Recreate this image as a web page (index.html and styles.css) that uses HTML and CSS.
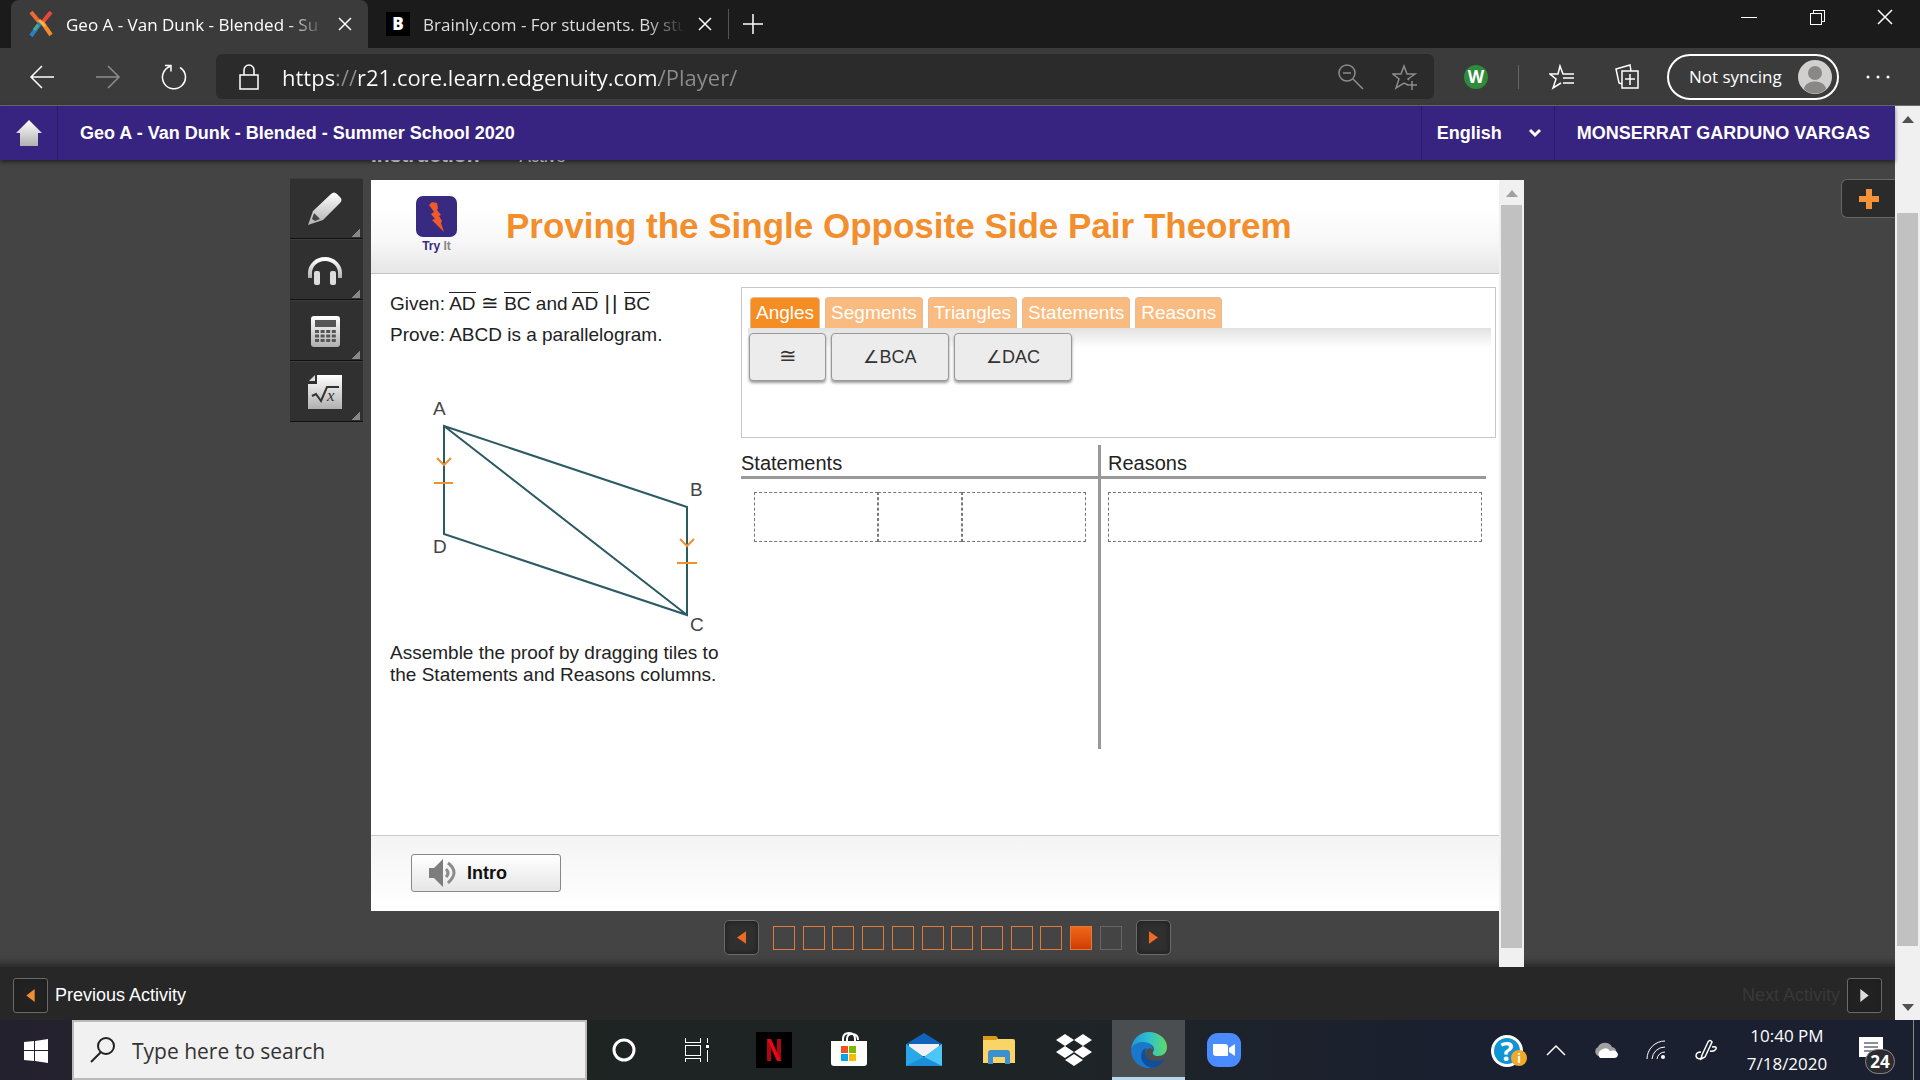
FILE: index.html
```html
<!DOCTYPE html>
<html lang="en">
  <head>
    <meta charset="UTF-8" />
    <meta name="viewport" content="width=device-width, initial-scale=1.0" />
    <title>Geo A - Van Dunk - Blended - Summer School 2020</title>
    <link rel="stylesheet" href="styles.css">
  </head>
  <body>
    <!-- browser tabs -->
    <div class="tabstrip">
      <div class="browser-tab active">
        <svg width="24" height="26" viewBox="0 0 24 26">
          <path d="M2 1l9 11" stroke="#ee6a35" stroke-width="4"/>
          <path d="M22 1l-9 11" stroke="#e8483c" stroke-width="4"/>
          <path d="M13 11l9 13" stroke="#f08a2c" stroke-width="4"/>
          <path d="M12 11L2 25" stroke="#2f7fc0" stroke-width="4"/>
          <path d="M10 9l6 6" stroke="#f5b63c" stroke-width="3"/>
          <path d="M9 14l-4 5" stroke="#3fae8a" stroke-width="3"/>
        </svg>
        <span class="tab-title">Geo A - Van Dunk - Blended - Su</span>
        <button class="icon-btn" aria-label="Close tab">
          <svg width="14" height="14" viewBox="0 0 14 14" class="line"><path d="M1 1l12 12M13 1L1 13"/></svg>
        </button>
      </div>
      <div class="browser-tab">
        <span class="brainly">B</span>
        <span class="tab-title">Brainly.com - For students. By stu</span>
        <button class="icon-btn" aria-label="Close tab">
          <svg width="14" height="14" viewBox="0 0 14 14" class="line"><path d="M1 1l12 12M13 1L1 13"/></svg>
        </button>
      </div>
      <button class="icon-btn new-tab" aria-label="New tab">
        <svg width="20" height="20" viewBox="0 0 20 20" class="line"><path d="M10 0v20M0 10h20"/></svg>
      </button>
      <div class="window-btns">
        <button class="icon-btn" aria-label="Minimize">
          <svg width="16" height="16" viewBox="0 0 16 16" class="line crisp thin"><path d="M0 8h16"/></svg>
        </button>
        <button class="icon-btn" aria-label="Restore">
          <svg width="16" height="16" viewBox="0 0 16 16" class="line crisp thin"><path d="M1 4h11v11H1zM4 4V1h11v11h-3"/></svg>
        </button>
        <button class="icon-btn" aria-label="Close">
          <svg width="16" height="16" viewBox="0 0 16 16" class="line"><path d="M1 1l14 14M15 1L1 15"/></svg>
        </button>
      </div>
    </div>

    <!-- address bar -->
    <div class="toolbar">
      <div class="nav-btns">
        <button class="icon-btn" aria-label="Back">
          <svg width="26" height="24" viewBox="0 0 26 24" class="line"><path d="M25 12H2M13 1L2 12l11 11"/></svg>
        </button>
        <button class="icon-btn dim" aria-label="Forward">
          <svg width="26" height="24" viewBox="0 0 26 24" class="line"><path d="M1 12h23M13 1l11 11-11 11"/></svg>
        </button>
        <button class="icon-btn" aria-label="Refresh">
          <svg width="26" height="26" viewBox="0 0 26 26" class="line"><path d="M19 3.500A11.500 11.500 0 1 1 9 2.500M4 1.500h6v6"/></svg>
        </button>
      </div>
      <div class="address">
        <svg width="20" height="26" viewBox="0 0 20 26" class="line"><path d="M1 11h18v14H1zM5 11V6a5 5 0 0 1 10 0v5"/></svg>
        <input class="url" type="text" aria-label="Address" value="https://r21.core.learn.edgenuity.com/Player/">
        <button class="icon-btn dim" aria-label="Zoom">
          <svg width="26" height="26" viewBox="0 0 26 26" class="line"><circle cx="9" cy="9" r="8"/><path d="M15 15l10 10M5 9h8"/></svg>
        </button>
        <button class="icon-btn dim" aria-label="Add to favorites">
          <svg width="26" height="26" viewBox="0 0 26 26" class="line"><path d="M17 16l-1-1 7-5h-8L12 2 9 10H1l6 5-3 9 8-5 4 2M20 17v9M15 21h10"/></svg>
        </button>
      </div>
      <div class="toolbar-right">
        <span class="w-badge">W</span>
        <span class="divider"></span>
        <button class="icon-btn" aria-label="Favorites">
          <svg width="26" height="26" viewBox="0 0 26 26" class="line"><path d="M25 10H14L11 2 9 10H1l6 5-3 9 8-5M14 14h11M14 19h11"/></svg>
        </button>
        <button class="icon-btn" aria-label="Collections">
          <svg width="26" height="26" viewBox="0 0 26 26" class="line"><path d="M8 7h16v17H8zM16 10v11M11 15h10M8 20l-3-1L2 5l14-4 1 6"/></svg>
        </button>
        <button class="profile">
          Not syncing
          <svg width="34" height="34" viewBox="0 0 34 34"><circle cx="17" cy="17" r="17" fill="#d2d0ce"/><circle cx="17" cy="13" r="7" fill="#8a8886"/><path d="M6 29c1-10 21-10 22 0-6 6-16 6-22 0z" fill="#8a8886"/></svg>
        </button>
        <button class="icon-btn" aria-label="More">
          <svg width="24" height="4" viewBox="0 0 24 4" fill="#fff"><circle cx="2" cy="2" r="1.500"/><circle cx="12" cy="2" r="1.500"/><circle cx="22" cy="2" r="1.500"/></svg>
        </button>
      </div>
    </div>

    <div class="page">
      <div class="player">
        <header class="course-bar">
          <a class="home" href="#" aria-label="Home">
            <svg width="26" height="26" viewBox="0 0 26 26">
              <defs><linearGradient id="silver" x1="0" y1="0" x2="0" y2="1"><stop offset="0" stop-color="#fff"/><stop offset="1" stop-color="#b0b0b0"/></linearGradient></defs>
              <path d="M13 0l13 13h-4v13H4V13H0z" fill="url(#silver)"/>
            </svg>
          </a>
          <div class="course-name">Geo A - Van Dunk - Blended - Summer School 2020</div>
          <div class="language">
            <select aria-label="Language"><option>English</option></select>
            <svg width="14" height="10" viewBox="0 0 14 10"><path d="M2 2l5 5 5-5" fill="none" stroke="#fff" stroke-width="3"/></svg>
          </div>
          <div class="student">MONSERRAT GARDUNO VARGAS</div>
        </header>

        <main class="stage">
          <div class="tools">
            <button aria-label="Highlighter">
              <svg width="36" height="36" viewBox="0 0 36 36"><path d="M1 34l5-14L24 3q3-3 6 0l3 3q3 3 0 6L16 29z" fill="url(#silver)"/><path d="M5 28l2-6 6 6-5 2z" fill="#444"/></svg>
            </button>
            <button aria-label="Read aloud">
              <svg width="36" height="36" viewBox="0 0 36 36"><path d="M3 26v-5a15 14 0 0 1 30 0v5" fill="none" stroke="url(#silver)" stroke-width="4"/><rect x="7" y="19" width="6" height="14" rx="2" fill="#ddd"/><rect x="23" y="19" width="6" height="14" rx="2" fill="#ddd"/></svg>
            </button>
            <button aria-label="Calculator">
              <svg width="36" height="36" viewBox="0 0 36 36"><rect x="4" y="3" width="29" height="31" rx="3" fill="url(#silver)"/><path d="M8 7h21v7H8z" fill="#555"/><path d="M8 18.500h21M8 23h21M8 27.500h21" stroke="#555" stroke-width="3" stroke-dasharray="4 1.600"/></svg>
            </button>
            <button aria-label="Formulas">
              <svg width="36" height="36" viewBox="0 0 36 36"><path d="M10 1h25v34H1V10h9z" fill="url(#silver)"/><path d="M2 7l6-6v6z" fill="#ddd"/><path d="M5 22l4-2 5 7 6-14h12" fill="none" stroke="#333" stroke-width="2"/><text x="20" y="27" class="formula">x</text></svg>
            </button>
          </div>

          <div class="lesson">
            <div class="crumbs"><span class="crumb-main">Instruction</span><span>Active</span></div>
            <div class="frame">
              <div class="frame-main">
                <article class="slide">
                  <div class="slide-head">
                    <div class="try-it">
                      <svg width="41" height="41" viewBox="0 0 41 41"><rect width="41" height="41" rx="7" fill="#372a80"/><path d="M13 9l3-3 5 1 1 5-1 2 4 5-2 1 3 5-1 2 3 9-9-9-3-3 3-1-4-5 3-2z" fill="#f0592a"/></svg>
                      <span>Try <b>It</b></span>
                    </div>
                    <h1>Proving the Single Opposite Side Pair Theorem</h1>
                  </div>

                  <div class="slide-body">
                    <section class="problem">
                      <p class="given">Given: <span class="seg">AD</span> <span class="cong">≅</span> <span class="seg">BC</span> and <span class="seg">AD</span> <span class="bar">|</span><span class="bar">|</span> <span class="seg">BC</span></p>
                      <p class="given">Prove: ABCD is a parallelogram.</p>
                      <svg class="figure" width="340" height="292" viewBox="0 0 340 292">
                        <g fill="none" stroke="#2b5a63" stroke-width="2">
                          <path d="M54 76L297 157V265L54 184zL297 265"/>
                        </g>
                        <g fill="none" stroke="#f0902e" stroke-width="2">
                          <path d="M47 108l7 7 7-7M44 133h19"/>
                          <path d="M290 189l7 7 7-7M287 213h20"/>
                        </g>
                        <text x="43" y="65">A</text>
                        <text x="300" y="146">B</text>
                        <text x="300" y="281">C</text>
                        <text x="43" y="203">D</text>
                      </svg>
                      <p class="directions">Assemble the proof by dragging tiles to the Statements and Reasons columns.</p>
                    </section>

                    <section class="proof">
                      <div class="bank">
                        <div class="bank-tabs">
                          <button class="active">Angles</button>
                          <button>Segments</button>
                          <button>Triangles</button>
                          <button>Statements</button>
                          <button>Reasons</button>
                        </div>
                        <div class="tiles">
                          <button class="tile small"><span class="cong">≅</span></button>
                          <button class="tile">∠BCA</button>
                          <button class="tile">∠DAC</button>
                        </div>
                      </div>
                      <table class="proof-table">
                        <thead>
                          <tr><th>Statements</th><th>Reasons</th></tr>
                        </thead>
                        <tbody>
                          <tr>
                            <td><div class="slots"><span></span><span class="narrow"></span><span></span></div></td>
                            <td><div class="slots"><span></span></div></td>
                          </tr>
                        </tbody>
                      </table>
                    </section>
                  </div>

                  <div class="slide-foot">
                    <button class="intro">
                      <svg width="28" height="28" viewBox="0 0 28 28"><path d="M0 9h5l9-9v28l-9-9H0z" fill="#7d7d7d"/><path d="M17 10q4 4 0 8M19 4q12 9 0 20" fill="none" stroke="#8b8b8b" stroke-width="3"/></svg>
                      Intro
                    </button>
                  </div>
                </article>

                <nav class="pager">
                  <button class="arrow" aria-label="Previous"><svg width="9" height="13" viewBox="0 0 10 14"><path d="M10 0v14L0 7z" fill="#ef6a22"/></svg></button>
                  <div class="steps">
                    <a href="#"></a><a href="#"></a><a href="#"></a><a href="#"></a><a href="#"></a><a href="#"></a>
                    <a href="#"></a><a href="#"></a><a href="#"></a><a href="#"></a><a href="#" class="current"></a><a href="#" class="locked"></a>
                  </div>
                  <button class="arrow" aria-label="Next"><svg width="9" height="13" viewBox="0 0 10 14"><path d="M0 0v14l10-7z" fill="#ef6a22"/></svg></button>
                </nav>
              </div>
              <div class="scroll inner">
                <svg width="12" height="7" viewBox="0 0 12 7"><path d="M0 7l6-7 6 7z" fill="#a0a0a0"/></svg>
                <div class="thumb"></div>
              </div>
            </div>
          </div>

          <button class="expand" aria-label="Open panel">
            <svg width="20" height="20" viewBox="0 0 20 20"><path d="M10 0v20M0 10h20" stroke="#f5923a" stroke-width="6"/></svg>
          </button>
        </main>

        <footer class="activity-bar">
          <div class="activity">
            <button class="arrow" aria-label="Previous activity"><svg width="9" height="13" viewBox="0 0 9 14"><path d="M9 0v14L0 7z" fill="#f08c32"/></svg></button>
            <span>Previous Activity</span>
          </div>
          <div class="activity disabled">
            <span>Next Activity</span>
            <button class="arrow" aria-label="Next activity"><svg width="9" height="13" viewBox="0 0 9 14"><path d="M0 0v14l9-7z" fill="#ddd"/></svg></button>
          </div>
        </footer>
      </div>

      <div class="scroll outer">
        <svg width="12" height="7" viewBox="0 0 12 7"><path d="M0 7l6-7 6 7z" fill="#505050"/></svg>
        <div class="thumb"></div>
        <svg width="12" height="7" viewBox="0 0 12 7"><path d="M0 0l6 7 6-7z" fill="#505050"/></svg>
      </div>
    </div>

    <!-- windows taskbar -->
    <div class="taskbar">
      <button class="start" aria-label="Start">
        <svg width="24" height="24" viewBox="0 0 24 24" fill="#fff"><path d="M0 3l10-1v9H0zM11 2l13-2v11H11zM0 12h10v10L0 21zM11 12h13v12l-13-2z"/></svg>
      </button>
      <label class="search">
        <svg width="26" height="26" viewBox="0 0 26 26" fill="none" stroke="#222" stroke-width="2"><circle cx="16" cy="9" r="8"/><path d="M11 15L1 25"/></svg>
        <input type="text" placeholder="Type here to search">
      </label>
      <div class="apps">
        <button aria-label="Cortana">
          <svg width="26" height="26" viewBox="0 0 26 26"><circle cx="13" cy="13" r="10" fill="none" stroke="#fff" stroke-width="3"/></svg>
        </button>
        <button aria-label="Task view">
          <svg width="30" height="24" viewBox="0 0 30 24" class="line crisp thin"><path d="M1 0v4h15V0M1 7h15v10H1zM1 24v-4h15v4M23 0v5M23 12v12"/><path d="M22 7h3v3h-3z" fill="#fff" stroke="none"/></svg>
        </button>
        <button aria-label="Netflix">
          <svg width="36" height="36" viewBox="0 0 36 36"><path d="M0 0h36v36H0z" fill="#000"/><path d="M11 7h4v22h-4zM21 7h4v22h-4z" fill="#b1060f"/><path d="M11 7h4l10 22h-4z" fill="#e50914"/></svg>
        </button>
        <button aria-label="Microsoft Store">
          <svg width="36" height="36" viewBox="0 0 36 36"><path d="M12 10V7q0-6 6-6t6 6v3M16 10V7q0-5 5-5 6 0 6 6" fill="none" stroke="#fff" stroke-width="2"/><path d="M0 9h36v22q0 3-3 3H3q-3 0-3-3z" fill="#fff"/><path d="M10 14h7v7h-7z" fill="#f25022"/><path d="M18 14h7v7h-7z" fill="#7fba00"/><path d="M10 22h7v7h-7z" fill="#00a4ef"/><path d="M18 22h7v7h-7z" fill="#ffb900"/></svg>
        </button>
        <button aria-label="Mail">
          <svg width="36" height="36" viewBox="0 0 36 36"><path d="M0 12L18 1l18 11v12H0z" fill="#0f63b8"/><path d="M3 12h30v12H3z" fill="#f2f2f2"/><path d="M0 12l18 13 18-13v22H0z" fill="#2aa7e8"/><path d="M36 12v22L18 25z" fill="#4cc6f5"/><path d="M0 34l18-9 18 9z" fill="#1c8fd9"/></svg>
        </button>
        <button aria-label="File Explorer">
          <svg width="34" height="30" viewBox="0 0 34 30"><path d="M1 3q0-2 2-2h10l3 3h15q2 0 2 2v22H1z" fill="#f9d467"/><path d="M1 1h13l2 2-2 2H1z" fill="#d99a1b"/><path d="M6 29V18q0-3 3-3h16q3 0 3 3v11h-5v-7H11v7z" fill="#3c8fd0"/></svg>
        </button>
        <button aria-label="Dropbox">
          <svg width="36" height="32" viewBox="0 0 36 32" fill="#fff"><path d="M9 0l9 6-9 6-9-6zM27 0l9 6-9 6-9-6zM9 12l9 6-9 6-9-6zM27 12l9 6-9 6-9-6zM18 20l9 6-9 6-9-6z"/></svg>
        </button>
        <button class="running" aria-label="Microsoft Edge">
          <svg width="36" height="36" viewBox="0 0 36 36">
            <defs><linearGradient id="wave"><stop offset="0" stop-color="#2196d8"/><stop offset=".5" stop-color="#2fc1cf"/><stop offset="1" stop-color="#5fdc62"/></linearGradient></defs>
            <path d="M0 17C1 7 9 0 18 0c10 0 18 7 18 15 0 6-4 9-9 9-4 0-6-2-5-4 3-4-1-9-8-9C7 11 2 13 0 17z" fill="url(#wave)"/>
            <path d="M0 18c1-5 6-8 12-8 5 0 10 3 10 8-3-4-8-1-8 4 0 7 5 13 11 13-3 1-5 1-7 1C8 36 0 28 0 18z" fill="#1a78cc"/>
            <path d="M13 17c-5 5-4 16 8 19 6-1 10-4 13-9-9 5-20 1-20-6 0-2 1-4 2-5z" fill="#114f9c"/>
          </svg>
        </button>
        <button aria-label="Zoom">
          <svg width="34" height="34" viewBox="0 0 34 34"><rect width="34" height="34" rx="11" fill="#4a8cff"/><path d="M6 11h12q3 0 3 3v9H9q-3 0-3-3zM22 15l6-4v12l-6-4z" fill="#fff"/></svg>
        </button>
      </div>
      <div class="tray">
        <button class="help" aria-label="Help">
          <svg width="36" height="34" viewBox="0 0 36 34"><circle cx="16" cy="18" r="16" fill="#fff"/><circle cx="16" cy="18" r="13" fill="#1193d4"/><text x="16" y="28" class="help-mark">?</text><circle cx="28" cy="25" r="8" fill="#efa92b"/><text x="28" y="30" class="info-mark">i</text></svg>
        </button>
        <button aria-label="Show hidden icons">
          <svg width="20" height="12" viewBox="0 0 20 12" class="line"><path d="M1 11l9-9 9 9"/></svg>
        </button>
        <button aria-label="OneDrive">
          <svg width="26" height="18" viewBox="0 0 26 18"><path d="M5 15a5 5 0 0 1 0-9 8 8 0 0 1 14 0 5 5 0 0 1 4 7z" fill="#a0a0a0"/><path d="M7 17a5 5 0 0 1 1-8q6-4 9 1 6-2 8 3 0 4-4 4z" fill="#fff"/></svg>
        </button>
        <button aria-label="Network">
          <svg width="20" height="20" viewBox="0 0 20 20" class="line thin"><path d="M1 19A18 18 0 0 1 19 1M6 19A13 13 0 0 1 19 7M11 19a8 8 0 0 1 8-7"/><circle cx="17" cy="17" r="2" fill="#fff" stroke="none"/></svg>
        </button>
        <button aria-label="Windows Ink">
          <svg width="22" height="22" viewBox="0 0 22 22" class="line"><path d="M7 16L13 3q2-3 4 0l-7 15-4 2zM6 13q-5 0-5 4 1 4 6 2M17 8q5-1 4 2-2 3-6 2"/></svg>
        </button>
        <time class="clock">10:40 PM<br>7/18/2020</time>
        <button class="notices" aria-label="Notifications">
          <svg width="24" height="26" viewBox="0 0 24 26"><path d="M0 0h24v20h-8l-5 5-3-5H0z" fill="#fff"/><path d="M5 6h14M5 10h14M5 14h14" stroke="#1b2030" stroke-width="1"/></svg>
          <span class="count">24</span>
        </button>
        <span class="peek"></span>
      </div>
    </div>
  </body>
</html>
```
FILE: styles.css
```css
* {
  box-sizing: border-box;
}

body {
  margin: 0;
  height: 100vh;
  display: flex;
  flex-direction: column;
  overflow: hidden;
  font-family: "Liberation Sans", Arial, sans-serif;
  background-color: #444;
}

button {
  padding: 0;
  border: none;
  background: none;
  color: inherit;
  font-family: inherit;
  cursor: pointer;
}

svg {
  display: block;
  flex: none;
}

.line {
  fill: none;
  stroke: #fff;
  stroke-width: 1.5;
}

.thin {
  stroke-width: 1;
}

.crisp {
  shape-rendering: crispEdges;
}

.dim .line {
  stroke: #8c8c8c;
}

.icon-btn {
  flex: none;
}

/* browser chrome */
.tabstrip,
.toolbar,
.taskbar {
  font-family: "Open Sans", "Segoe UI", sans-serif;
  color: #fff;
}

.tabstrip {
  height: 48px;
  flex: none;
  display: flex;
  align-items: center;
  padding-left: 11px;
  background-color: #1b1b1b;
}

.browser-tab {
  width: 357px;
  height: 48px;
  display: flex;
  align-items: center;
  gap: 13px;
  padding: 0 16px 0 18px;
  font-size: 17px;
  color: #ddd;
}

.browser-tab.active {
  background-color: #3b3b3b;
  border-radius: 8px 8px 0 0;
  color: #fff;
}

.browser-tab:not(.active) {
  width: 361px;
  border-right: 1px solid #555;
  height: 30px;
}

.tab-title {
  flex: 1;
  overflow: hidden;
  white-space: nowrap;
  -webkit-mask-image: linear-gradient(to right, #000 85%, transparent);
  mask-image: linear-gradient(to right, #000 85%, transparent);
}

.brainly {
  width: 24px;
  height: 24px;
  background-color: #000;
  color: #fff;
  font-size: 17px;
  font-weight: 800;
  line-height: 24px;
  text-align: center;
}

.new-tab {
  margin-left: 14px;
}

.window-btns {
  margin-left: auto;
  height: 34px;
  align-self: flex-start;
  display: flex;
  align-items: center;
  gap: 52px;
  padding-right: 27px;
}

.toolbar {
  height: 58px;
  flex: none;
  display: flex;
  align-items: center;
  background-color: #3b3b3b;
  border-bottom: 1px solid #6a6a6a;
}

.nav-btns {
  display: flex;
  align-items: center;
  gap: 40px;
  padding: 0 29px;
}

.address {
  flex: 1;
  height: 45px;
  display: flex;
  align-items: center;
  gap: 28px;
  padding: 0 16px 0 23px;
  border-radius: 6px;
  background-color: #2b2b2b;
}

.url {
  flex: 1;
  margin-left: -5px;
  padding: 0;
  border: none;
  outline: none;
  font-family: inherit;
  font-size: 22px;
  /* scheme and path are dimmed, the host is white */
  color: transparent;
  background: linear-gradient(to right, #fff 52px, #8c8c8c 52px, #8c8c8c 75px, #fff 75px, #fff 377px, #8c8c8c 377px);
  -webkit-background-clip: text;
  background-clip: text;
}

.toolbar-right {
  display: flex;
  align-items: center;
  gap: 27px;
  padding: 0 30px;
}

.w-badge {
  width: 24px;
  height: 24px;
  margin-right: 3px;
  border-radius: 50%;
  background-color: #2e8b3a;
  font-size: 17px;
  font-weight: bold;
  line-height: 24px;
  text-align: center;
}

.divider {
  width: 1px;
  height: 24px;
  margin-right: 3px;
  background-color: #666;
}

.toolbar-right .icon-btn + .icon-btn {
  margin-left: 12px;
}

.profile {
  height: 46px;
  width: 172px;
  display: flex;
  align-items: center;
  justify-content: space-between;
  padding: 0 5px 0 20px;
  border: 2px solid #fff;
  border-radius: 23px;
  font-size: 17px;
}

/* player */
.page {
  flex: 1;
  min-height: 0;
  display: flex;
}

.player {
  flex: 1;
  min-width: 0;
  display: flex;
  flex-direction: column;
}

.course-bar {
  position: relative;
  z-index: 1;
  height: 54px;
  flex: none;
  display: flex;
  align-items: stretch;
  background-color: #372480;
  box-shadow: 0 2px 4px rgba(0, 0, 0, 0.5);
  color: #fff;
  font-size: 18px;
  font-weight: bold;
}

.course-bar > * {
  display: flex;
  align-items: center;
}

.home {
  width: 58px;
  justify-content: center;
  border-right: 1px solid #2b1b68;
}

.course-name {
  flex: 1;
  padding-left: 22px;
}

.language {
  width: 134px;
  justify-content: space-between;
  padding: 0 12px 0 15px;
  border-left: 1px solid #2b1b68;
  border-right: 1px solid #2b1b68;
}

.language select {
  appearance: none;
  padding: 0;
  border: none;
  background: none;
  color: #fff;
  font: inherit;
}

.student {
  padding: 0 25px 0 22px;
}

.stage {
  flex: 1;
  min-height: 0;
  display: grid;
  grid-template-columns: minmax(81px, 1fr) minmax(0, 1153px) minmax(54px, 1fr);
  box-shadow: inset 0 -12px 6px -8px #2a2a2a;
}

.tools {
  justify-self: end;
  width: 73px;
  margin: 18px 8px 0 0;
}

.tools button {
  width: 73px;
  height: 61px;
  display: flex;
  align-items: center;
  justify-content: center;
  padding-right: 3px;
  border-bottom: 1px solid #111;
  border-top: 1px solid #3c3c3c;
  /* corner fold */
  background: linear-gradient(135deg, #303030 50%, #888 50%) right 3px bottom 1px / 8px 8px no-repeat #303030;
}

.formula {
  font: italic 17px "Liberation Serif", serif;
  fill: #333;
}

.lesson {
  min-width: 0;
  display: flex;
  flex-direction: column;
}

.crumbs {
  height: 20px;
  display: flex;
  gap: 40px;
  color: #fff;
  font-size: 17px;
  line-height: 20px;
}

.crumbs span {
  margin-top: -13px;
}

.crumbs .crumb-main {
  margin-top: -15px;
  font-size: 21px;
  font-weight: bold;
}

.frame {
  flex: 1;
  min-height: 0;
  display: flex;
}

.frame-main {
  flex: 1;
  min-width: 0;
  display: flex;
  flex-direction: column;
}

.slide {
  flex: 1;
  display: flex;
  flex-direction: column;
  background-color: #fff;
  color: #222;
}

.slide-head {
  height: 94px;
  display: flex;
  align-items: center;
  gap: 49px;
  padding: 0 0 2px 45px;
  border-bottom: 1px solid #c4c4c4;
  background: linear-gradient(#fff 30%, #f8f8f8 65%, #e6e6e6);
}

.slide-head h1 {
  margin: 0;
  color: #f28f2c;
  font-size: 35px;
  line-height: 40px;
}

.try-it {
  display: flex;
  flex-direction: column;
  align-items: center;
  color: #372a80;
  font-size: 12px;
  font-weight: bold;
  line-height: 18px;
}

.try-it b {
  color: #888;
}

.slide-body {
  flex: 1;
  display: flex;
}

.problem {
  width: 370px;
  padding: 14px 0 0 19px;
  font-size: 19px;
}

.problem p {
  margin: 0;
}

.given {
  line-height: 31px;
}

.seg {
  border-top: 1px solid #222;
}

.bar,
.cong {
  font-size: 21px;
  line-height: 20px;
}

.bar {
  margin: 0 1px;
}

.figure text {
  font-size: 19px;
  fill: #444;
}

.directions {
  width: 340px;
  line-height: 22px;
}

.proof {
  flex: 1;
  padding: 13px 3px 0 0;
}

.bank {
  height: 151px;
  padding: 9px 4px 0 6px;
  border: 1px solid #c6c6c6;
}

.bank-tabs {
  display: flex;
  gap: 5px;
  padding-left: 2px;
}

.bank-tabs button {
  height: 31px;
  padding: 0 5px;
  border: 1px solid #e0bd98;
  border-bottom: none;
  border-radius: 4px 4px 0 0;
  background-color: #fabb80;
  color: #fff;
  font-size: 19px;
}

.bank-tabs button.active {
  background-color: #f58c24;
}

.tiles {
  display: flex;
  gap: 5px;
  padding: 5px 1px 40px;
  background: linear-gradient(#e2e2e2, #fff 20px);
}

.tile {
  width: 118px;
  height: 48px;
  border: 1px solid #999;
  border-radius: 4px;
  background-color: #ececec;
  box-shadow: 0 2px 3px rgba(0, 0, 0, 0.4);
  color: #333;
  font-size: 18px;
}

.tile.small {
  width: 77px;
}

.proof-table {
  width: 745px;
  max-width: 100%;
  margin-top: 7px;
  border-spacing: 0;
  table-layout: fixed;
}

.proof-table th {
  height: 34px;
  padding: 5px 0 0;
  border-bottom: 3px solid #999;
  font-size: 20px;
  font-weight: normal;
  text-align: left;
}

.proof-table th:first-child,
.proof-table td:first-child {
  width: 360px;
  border-right: 3px solid #999;
}

.proof-table th + th {
  padding-left: 7px;
}

.proof-table td {
  height: 270px;
  padding: 13px 12px 0 13px;
  vertical-align: top;
}

.proof-table td + td {
  padding: 13px 4px 0 7px;
}

.slots {
  height: 50px;
  display: flex;
}

.slots span {
  flex: 3;
  border: 1px dashed #777;
}

.slots .narrow {
  flex: 2;
}

.slide-foot {
  height: 76px;
  padding: 18px 40px;
  border-top: 1px solid #ccc;
  background: linear-gradient(#f4f4f4, #fff);
}

.intro {
  width: 150px;
  height: 38px;
  display: flex;
  align-items: center;
  gap: 10px;
  padding-left: 17px;
  border: 1px solid #888;
  border-radius: 3px;
  background: linear-gradient(#fff, #e6e6e6);
  color: #111;
  font-size: 18px;
  font-weight: bold;
}

.pager {
  height: 56px;
  display: flex;
  justify-content: center;
  gap: 14px;
  padding: 9px 0 0 25px;
}

.arrow {
  width: 35px;
  height: 35px;
  display: flex;
  align-items: center;
  justify-content: center;
  border: 1px solid #6a6a6a;
  border-radius: 5px;
  background-color: #303030;
  box-shadow: inset 0 0 6px #1c1c1c;
}

.steps {
  width: 349px;
  display: flex;
  justify-content: space-between;
  padding-top: 6px;
}

.steps a {
  width: 22px;
  height: 24px;
  border: 1px solid #e07a3a;
}

.steps .current {
  background: linear-gradient(#f0681a, #d03c04);
}

.steps .locked {
  border-color: #666;
}

.expand {
  justify-self: end;
  width: 54px;
  height: 39px;
  margin-top: 19px;
  display: flex;
  align-items: center;
  justify-content: center;
  border: 1px solid #666;
  border-right: none;
  border-radius: 6px 0 0 6px;
  background-color: #2b2b2b;
}

.scroll {
  width: 25px;
  flex: none;
  display: flex;
  flex-direction: column;
  align-items: center;
  gap: 8px;
  padding-top: 10px;
  background-color: #f0f0f0;
}

.scroll .thumb {
  width: 21px;
  flex: 1;
  background-color: #c1c1c1;
}

.inner {
  padding-bottom: 19px;
}

.outer {
  padding-bottom: 9px;
}

.outer .thumb {
  margin: 82px 0 50px;
}

.activity-bar {
  height: 53px;
  flex: none;
  display: flex;
  align-items: center;
  justify-content: space-between;
  padding: 4px 13px 0;
  background-color: #272727;
  color: #fff;
  font-size: 18px;
}

.activity {
  display: flex;
  align-items: center;
  gap: 7px;
}

.activity .arrow {
  background-color: #222;
  border-radius: 3px;
}

.disabled span {
  color: #383838;
}

/* taskbar */
.taskbar {
  height: 60px;
  flex: none;
  display: flex;
  background: linear-gradient(to right, #24212e, #1e2422 30%, #1e2426 55%, #1b2030 75%);
}

.start {
  width: 72px;
  padding: 2px 0 0 24px;
}

.search {
  width: 515px;
  display: flex;
  align-items: center;
  gap: 16px;
  padding-left: 16px;
  border: 2px solid #bbb;
  background-color: #f1f1f1;
}

.search input {
  flex: 1;
  padding: 2px 0 0;
  border: none;
  outline: none;
  background: none;
  font-family: inherit;
  font-size: 21px;
}

.search input::placeholder {
  color: #333;
  opacity: 1;
}

.apps {
  display: flex;
  gap: 2px;
}

.apps button {
  width: 73px;
  display: flex;
  align-items: center;
  justify-content: center;
}

.apps .running {
  background-color: #4b4e50;
  box-shadow: inset 0 -3px #b5d8ee;
}

.tray {
  margin-left: auto;
  display: flex;
  align-items: center;
}

.tray button {
  width: 50px;
  display: flex;
  justify-content: center;
}

.tray .help {
  width: 44px;
}

.help-mark {
  font-size: 27px;
  font-weight: bold;
  fill: #fff;
  text-anchor: middle;
}

.info-mark {
  font-size: 12px;
  font-weight: bold;
  fill: #fff;
  text-anchor: middle;
}

.clock {
  width: 112px;
  font-size: 17px;
  line-height: 28px;
  text-align: center;
}

.tray .notices {
  position: relative;
  width: 56px;
}

.count {
  position: absolute;
  left: 22px;
  top: 12px;
  width: 30px;
  height: 25px;
  border: 1px solid #888;
  border-radius: 13px;
  background-color: #2c2c30;
  font-size: 17px;
  font-weight: bold;
  line-height: 23px;
  text-align: center;
}

.peek {
  width: 7px;
  height: 60px;
  margin-left: 14px;
  border-left: 1px solid #888;
}
```
